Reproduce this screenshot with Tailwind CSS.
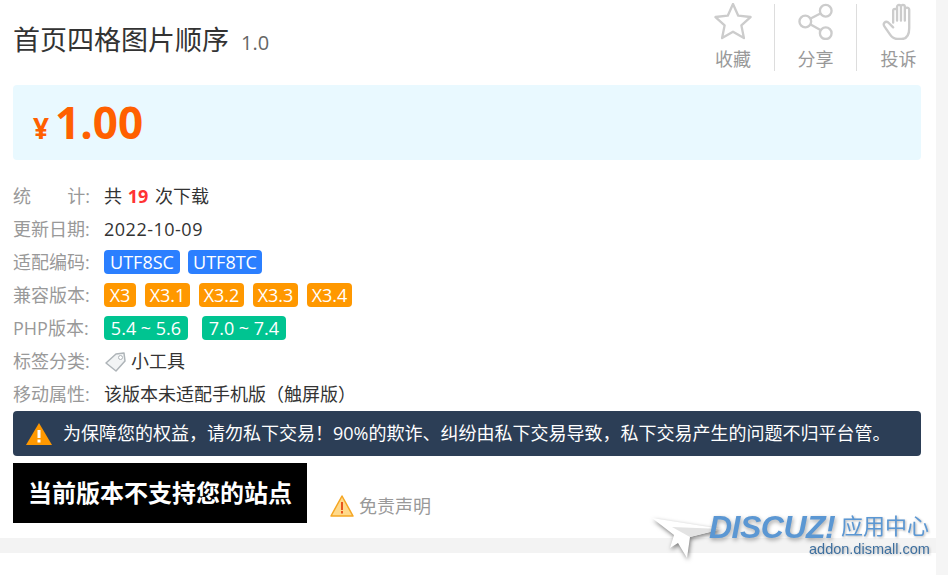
<!DOCTYPE html>
<html lang="zh-CN">
<head>
<meta charset="UTF-8">
<title>首页四格图片顺序</title>
<script src="https://cdn.jsdelivr.net/npm/@tailwindcss/browser@4"></script>
</head>
<body class="bg-white overflow-hidden font-['Open_Sans','Noto_Sans_CJK_SC',sans-serif]">
<div class="relative w-[948px] h-[575px] flex">
  <main class="w-[936px] shrink-0">
    <div class="bg-white h-[538px] pl-[13px] pr-[15px]">
      <!-- title -->
      <div class="flex justify-between h-[85px]">
        <h1 class="pt-[24px] text-[27px] leading-[32px] text-[#333] font-normal">首页四格图片顺序<span class="ml-[12px] text-[20px] text-[#666]">1.0</span></h1>
        <div class="flex pt-[4px] h-[71px] mr-[-19px] text-[18px] text-[#999]">
          <div class="w-[82px] flex flex-col items-center">
            <svg class="w-[38px] h-[38px] mt-[-1px]" viewBox="0 0 38 38" fill="none" stroke="#ccc" stroke-width="2.4" stroke-linejoin="round"><path d="M19 1l5.4 12 12.6 1.4-9.4 8.6 2.6 13L19 29.5 7.8 36l2.6-13L1 14.4 13.600 13z"/></svg>
            <span class="mt-[7px] leading-[24px]">收藏</span>
          </div>
          <div class="w-[82px] flex flex-col items-center border-l border-[#ddd]">
            <svg class="w-[38px] h-[38px] mt-[-1px]" viewBox="0 0 38 38" fill="none" stroke="#ccc" stroke-width="2.4"><circle cx="29" cy="8" r="6"/><circle cx="8" cy="19" r="6"/><circle cx="29" cy="31" r="6"/><path d="M13.500 16l10.500-5.500M13.500 22l10.500 6"/></svg>
            <span class="mt-[7px] leading-[24px]">分享</span>
          </div>
          <div class="w-[84px] flex flex-col items-center border-l border-[#ddd]">
            <svg class="w-[38px] h-[38px] mt-[-1px]" viewBox="0 0 38 38" fill="none" stroke="#ccc" stroke-width="2.400" stroke-linecap="round" stroke-linejoin="round"><path d="M13 20V8a2 2 0 0 1 4 0v10M17 18V4a2 2 0 0 1 4 0v14M21 18V4a2 2 0 0 1 4 0v14M25 18V7a2 2 0 0 1 4.500 0v19c0 7-3 11-8 11h-4c-4 0-6-2-8-5L4 24c-2-3 1-6 4-4l5 5"/></svg>
            <span class="mt-[7px] leading-[24px]">投诉</span>
          </div>
        </div>
      </div>
      <!-- price -->
      <div class="h-[75px] rounded-[4px] bg-[#e9f9ff] pl-[20px] flex items-baseline pt-[9px] text-[#ff6000] font-bold">
        <span class="text-[28px] leading-[56px] mr-[6px]">¥</span><span class="text-[44px] leading-[56px]">1.00</span>
      </div>
      <!-- attributes -->
      <dl class="mt-[20px] text-[18px] leading-[33px] text-[#333]">
        <div class="flex h-[33px]"><dt class="w-[77px] mr-[14px] text-[#999] flex justify-between"><span>统</span><span>计:</span></dt><dd>共 <b class="ml-[1px] mr-[2px] text-[#f33]">19</b> 次下载</dd></div>
        <div class="flex h-[33px]"><dt class="w-[77px] mr-[14px] text-[#999]">更新日期:</dt><dd class="tracking-[0.5px]">2022-10-09</dd></div>
        <div class="flex h-[33px] items-center"><dt class="w-[77px] mr-[14px] text-[#999]">适配编码:</dt><dd class="flex gap-[8px] mb-[2px] leading-[24px] text-center text-white">
          <span class="w-[76px] rounded-[4px] bg-[#2b7fff]">UTF8SC</span><span class="w-[74px] rounded-[4px] bg-[#2b7fff]">UTF8TC</span></dd></div>
        <div class="flex h-[33px] items-center"><dt class="w-[77px] mr-[14px] text-[#999]">兼容版本:</dt><dd class="flex gap-[9px] mb-[2px] leading-[24px] text-center text-white">
          <span class="w-[32px] rounded-[4px] bg-[#ff9800]">X3</span><span class="w-[45px] rounded-[4px] bg-[#ff9800]">X3.1</span><span class="w-[45px] rounded-[4px] bg-[#ff9800]">X3.2</span><span class="w-[45px] rounded-[4px] bg-[#ff9800]">X3.3</span><span class="w-[45px] rounded-[4px] bg-[#ff9800]">X3.4</span></dd></div>
        <div class="flex h-[33px] items-center"><dt class="w-[77px] mr-[14px] text-[#999] whitespace-nowrap">PHP版本:</dt><dd class="flex gap-[14px] mb-[2px] leading-[24px] text-center text-white">
          <span class="w-[84px] rounded-[4px] bg-[#00c491]">5.4 ~ 5.6</span><span class="w-[84px] rounded-[4px] bg-[#00c491]">7.0 ~ 7.4</span></dd></div>
        <div class="flex h-[33px] items-center"><dt class="w-[77px] mr-[14px] text-[#999]">标签分类:</dt><dd class="flex items-center gap-[5px]">
          <svg class="w-[22px] h-[22px]" viewBox="0 0 22 22"><path d="M2 12L12 3l8-1 1 8-9 10z" fill="#f2f4f5" stroke="#aeb4b8" stroke-width="1.500" stroke-linejoin="round"/><circle cx="16.500" cy="6.500" r="2" fill="#fff" stroke="#aeb4b8"/></svg>小工具</dd></div>
        <div class="flex h-[33px]"><dt class="w-[77px] mr-[14px] text-[#999]">移动属性:</dt><dd>该版本未适配手机版&#xFF08;触屏版&#xFF09;</dd></div>
      </dl>
      <!-- notice -->
      <div class="h-[45px] rounded-[4px] bg-[#2c3e56] pl-[13px] flex items-center gap-[11px] text-[18px] text-white">
        <svg class="w-[26px] h-[22px]" viewBox="0 0 26 22"><path d="M13 0L26 22H0z" fill="#ff9800"/><rect x="11.500" y="7" width="3" height="8" fill="#fff"/><rect x="11.500" y="16.500" width="3" height="3" fill="#fff"/></svg>
        <span class="whitespace-nowrap">为保障您的权益&#xFF0C;请勿私下交易&#xFF01;90%的欺诈、纠纷由私下交易导致&#xFF0C;私下交易产生的问题不归平台管。</span>
      </div>
      <!-- action -->
      <div class="mt-[7px] flex">
        <div class="w-[294px] h-[60px] bg-black text-white text-[24px] font-bold flex items-center justify-center">当前版本不支持您的站点</div>
        <div class="ml-[23px] mt-[26px] flex items-center gap-[5px] text-[18px] leading-[28px] text-[#999]">
          <svg class="w-[24px] h-[22px]" viewBox="0 0 24 22"><path d="M12 1L23 21H1z" fill="#ffd98a" stroke="#f5a623" stroke-width="1.500" stroke-linejoin="round"/><rect x="11" y="7" width="2" height="8" fill="#e8541e"/><rect x="11" y="16" width="2" height="2.500" fill="#e8541e"/></svg>
          免责声明
        </div>
      </div>
    </div>
    <div class="h-[15px] bg-[#f3f3f3]"></div>
  </main>
  <aside class="flex-1 bg-[#f5f5f5]"></aside>

  <!-- watermark sits on top of the page -->
  <div class="absolute left-[650px] top-[513px] w-[285px] h-[50px] font-['Liberation_Sans','Noto_Sans_CJK_SC',sans-serif]">
    <svg class="absolute left-0 top-[3px] w-[72px] h-[42px] drop-shadow-[1px_2px_2px_rgba(0,0,0,0.5)]" viewBox="0 0 72 42"><path d="M2 2l70 11-32 8-3 21-9-15-8 5 4-13z" fill="#fff"/><path d="M22 11l50 2-32 8z" fill="#e3e3e3"/></svg>
    <span class="absolute left-[59px] top-[-4px] text-[32px] leading-[36px] font-bold italic tracking-[-0.5px] text-[#5b97d3] drop-shadow-[1px_2px_2px_rgba(0,0,0,0.35)]">DISCUZ!</span>
    <span class="absolute left-[191px] top-[1px] text-[22px] leading-[26px] whitespace-nowrap text-[#5b97d3] drop-shadow-[1px_1px_1px_rgba(0,0,0,0.3)]">应用中心</span>
    <span class="absolute left-[159px] top-[27px] text-[14.5px] leading-[18px] whitespace-nowrap text-[#3d6f9f] drop-shadow-[1px_1px_1px_rgba(0,0,0,0.25)]">addon.dismall.com</span>
  </div>
</div>
</body>
</html>
